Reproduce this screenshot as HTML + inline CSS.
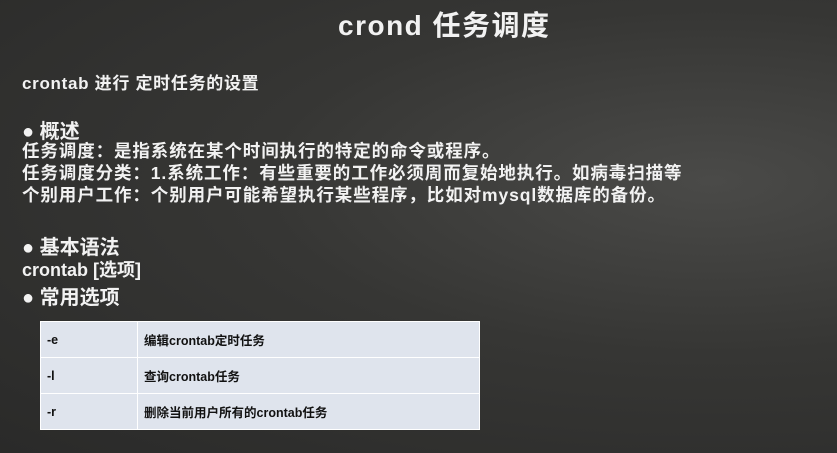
<!DOCTYPE html><html><head><meta charset="utf-8"><style>
body{margin:0;width:837px;height:453px;overflow:hidden;background:radial-gradient(ellipse at 85% 40%,#4a4a48 0%,#363634 45%,#2a2a29 100%);font-family:"Liberation Sans","Noto Sans CJK SC",sans-serif;color:#f2f2f2;font-weight:bold;position:relative}
.a{position:absolute;white-space:nowrap}
table{position:absolute;left:40px;top:321px;width:440px;border-collapse:collapse;background:#dfe4ed;color:#111;font-size:12.5px}
td{height:35px;border:1px solid #fff;padding:0 0 0 6px}
</style></head><body>
<div class="a" style="left:338px;top:4px;font-size:28px;letter-spacing:1.5px">crond 任务调度</div>
<div class="a" style="left:22px;top:69px;font-size:17px;letter-spacing:0.7px">crontab 进行 定时任务的设置</div>
<div class="a" style="left:22px;top:115px;font-size:20px">● 概述</div>
<div class="a" style="left:22px;top:140px;font-size:17.5px;line-height:22px;letter-spacing:0.9px">任务调度：是指系统在某个时间执行的特定的命令或程序。<br>任务调度分类：1.系统工作：有些重要的工作必须周而复始地执行。如病毒扫描等<br>个别用户工作：个别用户可能希望执行某些程序，比如对mysql数据库的备份。</div>
<div class="a" style="left:22px;top:231px;font-size:20px">● 基本语法</div>
<div class="a" style="left:22px;top:256px;font-size:18px">crontab [选项]</div>
<div class="a" style="left:22px;top:281px;font-size:20px">● 常用选项</div>
<table><tr><td style="width:90px">-e</td><td>编辑crontab定时任务</td></tr><tr><td>-l</td><td>查询crontab任务</td></tr><tr><td>-r</td><td>删除当前用户所有的crontab任务</td></tr></table>
</body></html>
